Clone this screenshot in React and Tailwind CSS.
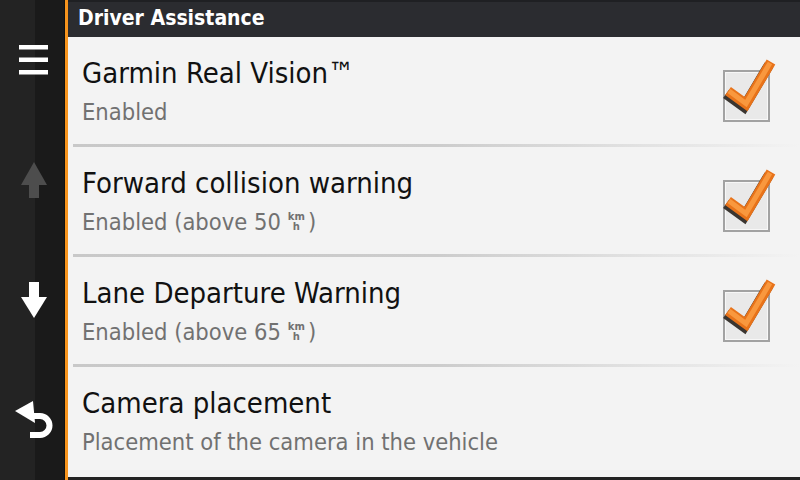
import React from "react";

const rows = [
  { title: "Garmin Real Vision™", sub: "Enabled", checked: true },
  { title: "Forward collision warning", sub: "Enabled (above 50", unit: true, checked: true },
  { title: "Lane Departure Warning", sub: "Enabled (above 65", unit: true, checked: true },
  { title: "Camera placement", sub: "Placement of the camera in the vehicle" },
];

function Menu() {
  return (
    <svg width="29" height="30" viewBox="0 0 29 30">
      <rect x="0" y="0" width="29" height="4.5" fill="#fff" />
      <rect x="0" y="12.5" width="29" height="4.5" fill="#fff" />
      <rect x="0" y="25" width="29" height="4.5" fill="#fff" />
    </svg>
  );
}

function ArrowUp() {
  return (
    <svg width="26" height="36" viewBox="0 0 26 36">
      <polygon points="13,0 26,23 0,23" fill="#4d4d4d" />
      <rect x="8" y="22" width="10" height="14" fill="#4d4d4d" />
    </svg>
  );
}

function ArrowDown() {
  return (
    <svg width="26" height="36" viewBox="0 0 26 36">
      <rect x="8" y="0" width="10" height="16" fill="#fff" />
      <polygon points="0,15 26,15 13,36" fill="#fff" />
    </svg>
  );
}

function Back() {
  return (
    <svg width="38" height="38" viewBox="0 0 38 38">
      <path d="M16 15 H25 A9.5 9.5 0 0 1 25 34 H15" fill="none" stroke="#fff" strokeWidth="6" />
      <polygon points="0,10 18,0 20,22" fill="#fff" />
    </svg>
  );
}

function Check() {
  return (
    <div className="relative w-[56px] h-[72px]">
      <div className="absolute left-[3px] top-[20px] w-[47px] h-[52px] border-2 border-[#a2a2a2] bg-[#e9e9e9]">
        <div className="w-full h-full border border-[#f7f7f7]" />
      </div>
      <svg className="absolute inset-0" width="56" height="72" viewBox="0 0 56 72">
        <g transform="translate(-2 3)">
          <polyline points="8,41 26,54 51,12" fill="none" stroke="#3a3530" strokeWidth="10" strokeLinejoin="miter" />
        </g>
        <polyline points="8,41 26,54 51,12" fill="none" stroke="#e8731a" strokeWidth="10" strokeLinejoin="miter" />
        <polyline points="9,41 26,53.5 50,13" fill="none" stroke="#f9983e" strokeWidth="5" strokeLinejoin="miter" />
      </svg>
    </div>
  );
}

function Row({ row, last }) {
  return (
    <>
      <div className={`flex justify-between ${last ? "flex-1" : "h-[107px]"}`}>
        <div className="pl-[14px] pt-[20px]">
          <div className="text-[29px] leading-[32px] text-[#111]">{row.title}</div>
          <div className="mt-[9px] text-[23.5px] leading-[28px] text-[#717171] flex items-start">
            <span>{row.sub}</span>
            {row.unit && (
              <>
                <span
                  className="ml-[7px] mt-[4px] flex flex-col items-center text-[10px] leading-[10px] font-bold font-stretch-normal"
                  style={{ fontFamily: '"DejaVu Sans", sans-serif' }}
                >
                  <span>km</span>
                  <span>h</span>
                </span>
                <span className="ml-[3px]">)</span>
              </>
            )}
          </div>
        </div>
        {row.checked && (
          <div className="mr-[24px] mt-[13px]">
            <Check />
          </div>
        )}
      </div>
      {!last && (
        <div className="h-[3px] ml-[5px] bg-gradient-to-r from-[#c8c8c8] via-[#cccccc] to-[#f3f3f3]" />
      )}
    </>
  );
}

export default function App() {
  return (
    <div
      className="w-[800px] h-[480px] flex overflow-hidden bg-[#f3f3f3] font-stretch-condensed"
      style={{ fontFamily: '"DejaVu Sans Condensed", "DejaVu Sans", sans-serif' }}
    >
      <div className="flex w-[65px] h-full">
        <div className="w-[35px] bg-[#232323]" />
        <div className="w-[29px] bg-[#1a1a1a]" />
        <div className="w-[1px] bg-[#111]" />
      </div>
      <div className="absolute left-0 top-0 w-[65px] h-[480px] flex flex-col pl-[2px]">
        <div className="flex-1 flex items-center justify-center"><Menu /></div>
        <div className="flex-1 flex items-center justify-center"><ArrowUp /></div>
        <div className="flex-1 flex items-center justify-center"><ArrowDown /></div>
        <div className="flex-1 flex items-center justify-center"><Back /></div>
      </div>
      <div className="w-[3px] bg-[#f7941d]" />
      <div className="flex-1 flex flex-col">
        <div className="h-[37px] bg-[#2b2c30] border-t-2 border-[#1f2023] pl-[10px] pt-[4px]">
          <div className="text-[21px] leading-[24px] font-bold text-white">Driver Assistance</div>
        </div>
        {rows.map((r, i) => (
          <Row key={i} row={r} last={i === rows.length - 1} />
        ))}
        <div className="h-[3px] bg-[#222]" />
      </div>
    </div>
  );
}
